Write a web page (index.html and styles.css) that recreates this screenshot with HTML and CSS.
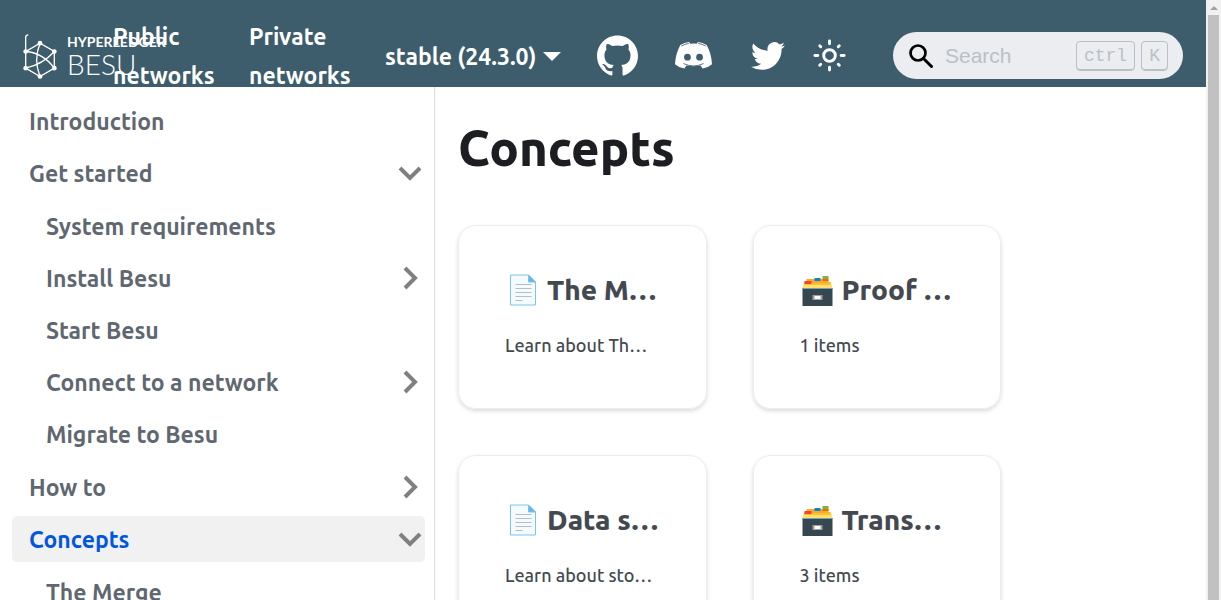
FILE: index.html
```html
<!DOCTYPE html>
<html lang="en">
<head>
<meta charset="utf-8">
<title>Concepts | Besu</title>
<link rel="stylesheet" href="styles.css">
</head>
<body>
<svg class="symbols" aria-hidden="true">
  <symbol id="page" viewBox="-2 -1 28 32">
    <path d="M1 0h18l7 7v23H1z" fill="#f5fafd" stroke="#7cc4ec"/>
    <path d="M19 0v7h7z" fill="#64b5ec" stroke="#7cc4ec"/>
    <path d="M6 9.500h16M6 13.500h16M6 17.500h16M6 21.500h16M6 25.500h7" stroke="#b3bec5"/>
  </symbol>
  <symbol id="box" viewBox="-1 -2 32 32">
    <path d="M3 6h26l2 7H1z" fill="#fbc02d"/>
    <path d="M5 3h22v4H5z" fill="#ffa726"/>
    <path d="M3 5h7v3H3z" fill="#f44336"/>
    <path d="M13 2h6v3h-6z" fill="#0288d1"/>
    <path d="M21 0h6v3h-6z" fill="#7cb342"/>
    <path d="M21 3h6v2h-6z" fill="#ef6c00"/>
    <path d="M2 9h28l1 4H1z" fill="#ffe070"/>
    <path d="M1 12h30v18H1z" fill="#37474f"/>
    <path d="M1 12h30v1H1z" fill="#6fa3b5"/>
    <path d="M11 19h10v5H11z" fill="#9e9e9e"/>
    <path d="M13 20h6v3h-6z" fill="#fff"/>
  </symbol>
  <symbol id="chevron" viewBox="0 0 24 24">
    <path d="M7 2l10 10L7 22" fill="none" stroke="#808080" stroke-width="4"/>
  </symbol>
</svg>
<div class="page">
  <header class="navbar">
    <nav class="navbar-row" aria-label="Main">
      <a class="brand" href="#">
        <svg class="brand-mark" viewBox="68 98 102 140" fill="none" stroke="#fff" stroke-width="4" aria-hidden="true">
          <path d="M76 153v50l43 25 43-25v-50l-43-25-43 25v-43q0-6 8-7"/>
          <path d="M76 153q52 4 86 50M162 153q-34 38-86 50M119 128q-20 50 0 100"/>
          <g fill="#fff" stroke="none"><circle cx="119" cy="128" r="7"/><circle cx="162" cy="153" r="7"/><circle cx="162" cy="203" r="7"/><circle cx="119" cy="228" r="7"/><circle cx="76" cy="203" r="7"/><circle cx="76" cy="153" r="7"/></g>
        </svg>
        <span class="brand-text"><span class="brand-small">HYPERLEDGER</span><span class="brand-large">BESU</span></span>
      </a>
      <a class="nav-link" href="#">Public networks</a>
      <a class="nav-link" href="#">Private networks</a>
      <a class="version" href="#">stable (24.3.0)</a>
      <div class="tools">
        <a class="github" href="#" aria-label="GitHub"><svg viewBox="0 0 24 24" fill="#fff"><path d="M12 .297c-6.630 0-12 5.373-12 12 0 5.303 3.438 9.800 8.205 11.385.6.113.82-.258.82-.577 0-.285-.010-1.040-.015-2.040-3.338.724-4.042-1.610-4.042-1.610C4.422 18.070 3.633 17.700 3.633 17.700c-1.087-.744.084-.729.084-.729 1.205.084 1.838 1.236 1.838 1.236 1.070 1.835 2.809 1.305 3.495.998.108-.776.417-1.305.76-1.605-2.665-.3-5.466-1.332-5.466-5.930 0-1.310.465-2.380 1.235-3.220-.135-.303-.54-1.523.105-3.176 0 0 1.005-.322 3.300 1.230.96-.267 1.980-.399 3-.405 1.020.006 2.040.138 3 .405 2.280-1.552 3.285-1.230 3.285-1.230.645 1.653.24 2.873.12 3.176.765.84 1.230 1.910 1.230 3.220 0 4.610-2.805 5.625-5.475 5.920.42.36.81 1.096.81 2.220 0 1.606-.015 2.896-.015 3.286 0 .315.21.69.825.57C20.565 22.092 24 17.592 24 12.297c0-6.627-5.373-12-12-12"/></svg></a>
        <a class="discord" href="#" aria-label="Discord"><svg viewBox="0 0 110 80"><path d="M16 9Q28 1 42 0l3 5q10-1 20 0l3-5q14 1 26 9 14 24 16 57-12 11-28 13l-6-9q-21 4-42 0l-6 9Q12 77 0 66 2 33 16 9z" fill="#fff"/><g fill="#3d5c6c"><circle cx="37" cy="45" r="10"/><circle cx="73" cy="45" r="10"/></g><path d="M19 12q10-6 22-8M91 12q-10-6-22-8M25 64q30 14 60 0" fill="none" stroke="#3d5c6c" stroke-width="2.500"/></svg></a>
        <a class="twitter" href="#" aria-label="Twitter"><svg viewBox="0 0 24 24" fill="#fff"><path d="M23.953 4.570a10 10 0 01-2.825.775 4.958 4.958 0 002.163-2.723c-.951.555-2.005.959-3.127 1.184a4.920 4.920 0 00-8.384 4.482C7.690 8.095 4.067 6.130 1.640 3.162a4.822 4.822 0 00-.666 2.475c0 1.710.87 3.213 2.188 4.096a4.904 4.904 0 01-2.228-.616v.06a4.923 4.923 0 003.946 4.827 4.996 4.996 0 01-2.212.085 4.936 4.936 0 004.604 3.417 9.867 9.867 0 01-6.102 2.105c-.39 0-.779-.023-1.170-.067a13.995 13.995 0 007.557 2.209c9.053 0 13.998-7.496 13.998-13.985 0-.21 0-.42-.015-.63A9.935 9.935 0 0024 4.590z"/></svg></a>
        <button class="theme" type="button" aria-label="Switch theme"><svg viewBox="0 0 24 24" fill="none" stroke="#fff" stroke-width="2" stroke-linecap="round"><circle cx="12" cy="12" r="4"/><path d="M12 2v2M12 20v2M2 12h2M20 12h2M5.300 5.300l.7.7M18 18l.7.7M18 6l.7-.7M5.300 18.700L6 18"/></svg></button>
        <div class="search">
          <svg class="search-icon" viewBox="0 0 24 24" fill="none" stroke="#000" aria-hidden="true"><circle cx="9" cy="9" r="7.500" stroke-width="2.700"/><path d="M14.500 14.500L22.500 22.500" stroke-width="3" stroke-linecap="round"/></svg>
          <input type="search" placeholder="Search" aria-label="Search">
          <kbd>ctrl</kbd><kbd>K</kbd>
        </div>
      </div>
    </nav>
  </header>
  <div class="body">
    <nav class="sidebar" aria-label="Docs">
      <ul class="menu">
        <li><a href="#">Introduction</a></li>
        <li><a href="#">Get started<svg class="open"><use href="#chevron"/></svg></a>
          <ul class="submenu">
            <li><a href="#">System requirements</a></li>
            <li><a href="#">Install Besu<svg><use href="#chevron"/></svg></a></li>
            <li><a href="#">Start Besu</a></li>
            <li><a href="#">Connect to a network<svg><use href="#chevron"/></svg></a></li>
            <li><a href="#">Migrate to Besu</a></li>
          </ul>
        </li>
        <li><a href="#">How to<svg><use href="#chevron"/></svg></a></li>
        <li><a class="active" href="#" aria-current="page">Concepts<svg class="open"><use href="#chevron"/></svg></a>
          <ul class="submenu">
            <li><a href="#">The Merge</a></li>
          </ul>
        </li>
      </ul>
    </nav>
    <main class="content">
      <h1>Concepts</h1>
      <section class="cards">
        <a class="card" href="#"><h2><svg><use href="#page"/></svg>The M…</h2><p>Learn about Th…</p></a>
        <a class="card" href="#"><h2><svg><use href="#box"/></svg>Proof …</h2><p>1 items</p></a>
        <a class="card" href="#"><h2><svg><use href="#page"/></svg>Data s…</h2><p>Learn about sto…</p></a>
        <a class="card" href="#"><h2><svg><use href="#box"/></svg>Trans…</h2><p>3 items</p></a>
      </section>
    </main>
  </div>
</div>
<div class="scrollbar" aria-hidden="true"><span class="scroll-up"></span><span class="scroll-thumb"></span></div>
</body>
</html>
```

FILE: styles.css
```css
* { box-sizing: border-box; }

body {
  margin: 0;
  height: 100vh;
  display: flex;
  overflow: hidden;
  background: #fff;
  color: #1c1e21;
  font-family: Ubuntu, "Noto Sans", sans-serif;
}

a { color: inherit; text-decoration: none; }
ul { list-style: none; margin: 0; padding: 0; }
svg { display: block; flex: none; }
.symbols { position: absolute; width: 0; height: 0; }

.page { flex: 1; min-width: 0; display: flex; flex-direction: column; }

.navbar {
  flex: none;
  height: 87px;
  padding: 17px 23px 0;
  overflow: hidden;
  background: #3d5c6c;
  color: #fff;
  font-size: 23px;
  font-weight: 600;
  line-height: 39px;
}
.navbar-row { display: flex; align-items: center; }

.brand { display: flex; align-items: center; gap: 10px; flex: none; width: 90px; white-space: nowrap; }
.brand-mark { width: 34px; height: 47px; }
.brand-text { display: flex; flex-direction: column; font-family: Lato, sans-serif; }
.brand-small { font-size: 14px; font-weight: 700; line-height: 16px; }
.brand-large { font-size: 28px; font-weight: 300; line-height: 28px; }

.nav-link { flex: 0 0 102px; margin-right: 34px; }
.version { display: flex; align-items: center; gap: 7px; white-space: nowrap; }
.version::after {
  content: "";
  border: 9px solid transparent;
  border-top-color: #fff;
  border-bottom: 0;
}

.tools { display: flex; align-items: center; margin: 0 0 1px auto; }
.github svg { width: 41px; height: 41px; }
.discord { margin-left: 37px; }
.discord svg { width: 37px; height: 27px; }
.twitter { margin-left: 39px; }
.twitter svg { width: 34px; height: 34px; }
.theme { margin-left: 27px; padding: 0; border: 0; background: none; }
.theme svg { width: 35px; height: 35px; }

.search {
  display: flex;
  align-items: center;
  gap: 6px;
  width: 290px;
  height: 47px;
  margin-left: 46px;
  padding: 0 15px 0 16px;
  border-radius: 24px;
  background: #ebedf0;
}
.search-icon { width: 24px; height: 24px; margin-right: 6px; }
.search input {
  flex: 1;
  min-width: 0;
  padding: 0;
  border: 0;
  background: none;
  font: 21px "Liberation Sans", sans-serif;
}
.search input::placeholder { color: #b9c1c7; }
kbd {
  padding: 0 7px;
  border: 1px solid #b9c1c7;
  border-radius: 4px;
  box-shadow: inset 0 -1px 0 #b9c1c7;
  color: #b9c1c7;
  font: 18px/28px "Liberation Mono", monospace;
}

.body { flex: 1; min-height: 0; display: flex; overflow: hidden; }

.sidebar {
  flex: 0 0 435px;
  padding: 11px 9px 0 12px;
  border-right: 1px solid #dadde1;
  color: #606770;
  font-size: 23px;
  font-weight: 600;
}
.menu, .submenu { display: flex; flex-direction: column; gap: 6px; }
.submenu { padding: 7px 0 1px 17px; }
.sidebar a {
  display: flex;
  align-items: center;
  justify-content: space-between;
  height: 46px;
  padding: 0 3px 0 17px;
  border-radius: 5px;
}
.sidebar svg { width: 24px; height: 24px; }
.sidebar .open { transform: rotate(90deg); }
.sidebar .active { background: #f1f1f1; color: #0056e0; }

.content { flex: 1; min-width: 0; padding: 30px 24px 0 23px; }
h1 { margin: 0 0 46px; font-size: 49px; font-weight: 800; line-height: 62px; }

.cards { display: grid; grid-template-columns: 1fr 1fr; gap: 46px; width: 75%; }
.card {
  min-width: 0;
  height: 184px;
  padding: 46px;
  border: 1px solid #ebedf0;
  border-radius: 18px;
  box-shadow: 0 2px 4px rgba(0, 0, 0, 0.15);
  color: #444950;
  white-space: nowrap;
}
.card h2 { display: flex; align-items: center; gap: 9px; margin: 0 0 20px; font-size: 28px; font-weight: 800; line-height: 36px; }
.card h2 svg { width: 33px; height: 32px; }
.card p { margin: 0; font-size: 18px; font-weight: 500; line-height: 34px; }

.scrollbar {
  flex: 0 0 15px;
  display: flex;
  flex-direction: column;
  align-items: center;
  background: #f1f1f1;
}
.scroll-up { margin: 6px 0 5px; border: 4px solid transparent; border-top: 0; border-bottom-color: #a3a3a3; }
.scroll-thumb { flex: 1; width: 11px; background: #c1c1c1; }
```
